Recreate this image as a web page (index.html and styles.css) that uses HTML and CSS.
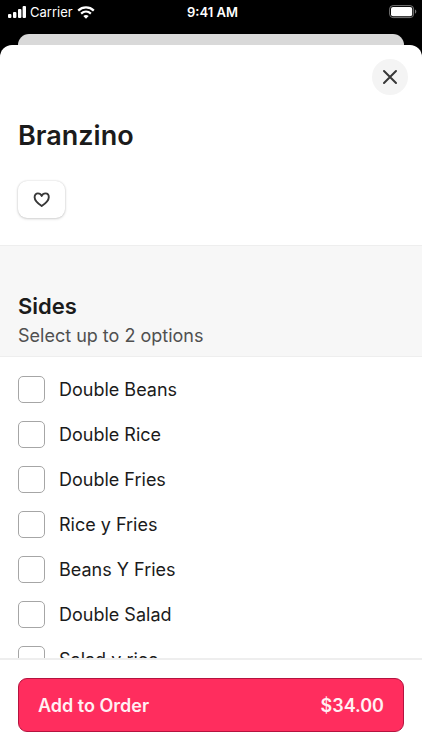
FILE: index.html
```html
<!DOCTYPE html>
<html lang="en">
<head>
<meta charset="utf-8">
<meta name="viewport" content="width=device-width, initial-scale=1">
<title>Branzino</title>
<link rel="stylesheet" href="styles.css">
</head>
<body>
<header class="status">
  <div class="status-left">
    <svg class="signal" width="18" height="12" viewBox="0 0 18 12" fill="#fff" aria-hidden="true">
      <rect x="0" y="8" width="3.400" height="4" rx="1"/><rect x="5" y="6" width="3.400" height="6" rx="1"/><rect x="10" y="3" width="3.400" height="9" rx="1"/><rect x="14.600" y="0" width="3.400" height="12" rx="1"/>
    </svg>
    <span class="carrier">Carrier</span>
    <svg width="18" height="13" viewBox="0 0 18 13" fill="none" stroke="#fff" aria-hidden="true">
      <path d="M1.2 4.6C5.6.4 12.400.4 16.800 4.600" stroke-width="2.300"/>
      <path d="M4.100 7.600C7 5 11 5 13.900 7.600" stroke-width="2.200"/>
      <path d="M9 12.700 6.300 10C7.900 8.700 10.100 8.700 11.700 10Z" fill="#fff" stroke="none"/>
    </svg>
  </div>
  <time class="clock">9:41 AM</time>
  <div class="status-right">
    <svg width="28" height="14" viewBox="0 0 28 14" aria-hidden="true">
      <rect x=".6" y=".6" width="24" height="12" rx="3.500" fill="none" stroke="#777"/>
      <rect x="2" y="2" width="21.200" height="9.200" rx="2" fill="#fff"/>
      <path d="M26 4.500c1.800.6 1.800 3.600 0 4.200Z" fill="#777"/>
    </svg>
  </div>
</header>
<div class="back-sheet"></div>
<main class="sheet">
  <div class="content">
    <section class="intro">
      <button class="close" type="button" aria-label="Close">
        <svg width="16" height="16" viewBox="0 0 16 16" fill="none" stroke="#383838" stroke-width="2" stroke-linecap="round" aria-hidden="true"><path d="M2 2 14 14M14 2 2 14"/></svg>
      </button>
      <h1 class="title">Branzino</h1>
      <button class="favorite" type="button" aria-label="Save to favorites">
        <svg width="18" height="16" viewBox="0 0 18 16" fill="none" stroke="#383838" stroke-width="1.900" stroke-linejoin="round" aria-hidden="true"><path d="M8.700 14C6.200 12.300 1.600 9 1.600 5.200 1.600 2.900 3.100 1.400 4.900 1.400 6.600 1.400 8 2.300 8.700 4 9.400 2.300 10.800 1.400 12.500 1.400 14.300 1.400 15.800 2.900 15.800 5.200 15.800 9 11.200 12.300 8.700 14Z"/></svg>
      </button>
    </section>
    <section class="group-head">
      <h2 class="group-title">Sides</h2>
      <p class="group-note">Select up to 2 options</p>
    </section>
    <div class="options">
      <label class="option"><input class="check" type="checkbox">Double Beans</label>
      <label class="option"><input class="check" type="checkbox">Double Rice</label>
      <label class="option"><input class="check" type="checkbox">Double Fries</label>
      <label class="option"><input class="check" type="checkbox">Rice y Fries</label>
      <label class="option"><input class="check" type="checkbox">Beans Y Fries</label>
      <label class="option"><input class="check" type="checkbox">Double Salad</label>
      <label class="option"><input class="check" type="checkbox">Salad y rice</label>
    </div>
  </div>
  <footer class="footer">
    <button class="add" type="button"><span>Add to Order</span><span>$34.00</span></button>
  </footer>
</main>
</body>
</html>
```
FILE: styles.css
```css
* { box-sizing: border-box; }
body {
  margin: 0;
  height: 100vh;
  display: flex;
  flex-direction: column;
  background: #000;
  color: #1b1b1b;
  font-family: Inter, "Liberation Sans", sans-serif;
  overflow: hidden;
}
h1, h2, p { margin: 0; }
button { font: inherit; padding: 0; cursor: pointer; }
svg { display: block; }

.status {
  display: grid;
  grid-template-columns: 1fr auto 1fr;
  align-items: center;
  height: 24px;
  margin-bottom: 10px;
  padding: 0 5px 0 8px;
  color: #fff;
  font-size: 13px;
  line-height: 24px;
}
.status-left { display: flex; align-items: center; gap: 4px; }
.status-right { display: flex; justify-content: flex-end; }
.clock { font-weight: 600; }

.back-sheet {
  flex: none;
  height: 11px;
  margin: 0 18px;
  border-radius: 11px 11px 0 0;
  background: #d9d9d9;
}
.sheet {
  flex: 1;
  min-height: 0;
  display: flex;
  flex-direction: column;
  border-radius: 12px 12px 0 0;
  background: #fff;
  overflow: hidden;
}
.content {
  flex: 1;
  min-height: 0;
  overflow-y: auto;
  scrollbar-width: none;
}
.intro {
  display: flex;
  flex-direction: column;
  align-items: flex-start;
  padding: 14px 14px 27px 18px;
}
.close {
  align-self: flex-end;
  display: grid;
  place-items: center;
  width: 36px;
  height: 36px;
  border: 0;
  border-radius: 50%;
  background: #f4f4f4;
}
.title {
  margin-top: 24px;
  font-size: 27px;
  line-height: 34px;
  font-weight: 600;
}
.favorite {
  display: grid;
  place-items: center;
  width: 47px;
  height: 37px;
  margin-top: 28px;
  border: 0;
  border-radius: 9px;
  background: #fff;
  box-shadow: 0 0 2px rgba(0, 0, 0, .16), 0 1px 3px rgba(0, 0, 0, .16);
}
.group-head {
  padding: 45px 18px 6px;
  border-top: 1px solid #eee;
  border-bottom: 1px solid #eee;
  background: #f7f7f7;
}
.group-title {
  font-size: 22px;
  line-height: 30px;
  font-weight: 600;
}
.group-note {
  color: #505050;
  font-size: 18px;
  line-height: 29px;
}
.options { padding: 10px 18px; }
.option {
  display: flex;
  align-items: center;
  gap: 14px;
  height: 45px;
  font-size: 18px;
}
.check {
  appearance: none;
  width: 27px;
  height: 27px;
  margin: 0;
  border: 1px solid #a6a6a6;
  border-radius: 5px;
  background: #fff;
}
.check:checked { background: #ff2d5e; }
.footer {
  flex: none;
  padding: 18px;
  border-top: 2px solid #eee;
}
.add {
  display: flex;
  justify-content: space-between;
  align-items: center;
  width: 100%;
  height: 54px;
  padding: 0 19px;
  border: 1px solid #b5133f;
  border-radius: 9px;
  background: #ff2d5e;
  color: #fff0f3;
  font-size: 18px;
  font-weight: 600;
}
```
